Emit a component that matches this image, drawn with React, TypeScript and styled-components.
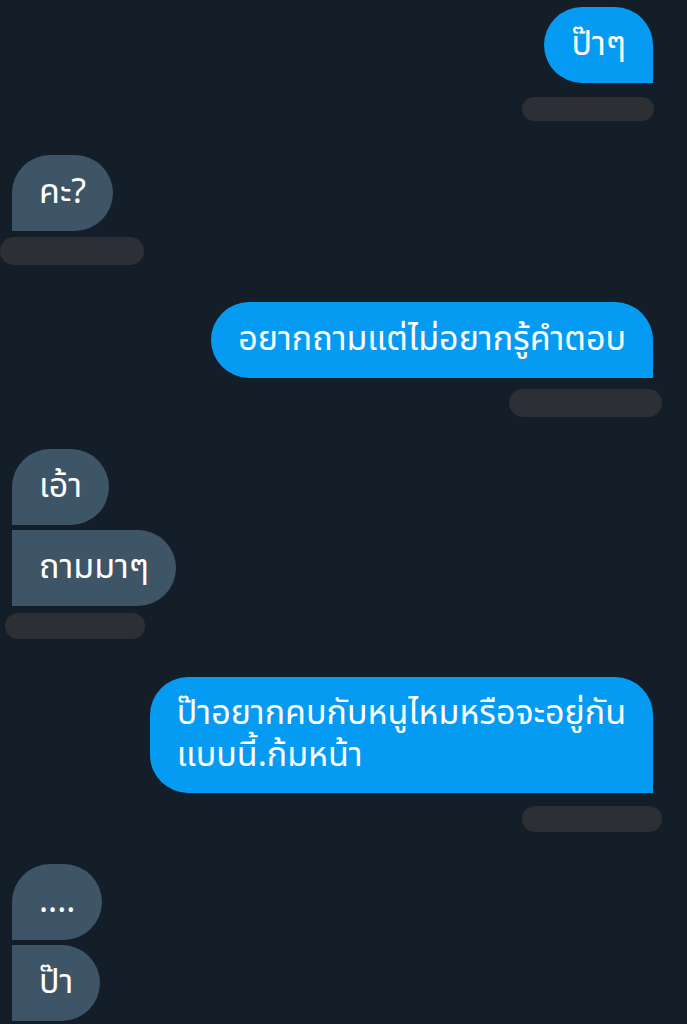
import React from "react";
import styled, { createGlobalStyle } from "styled-components";

const GlobalStyle = createGlobalStyle`
  html, body {
    margin: 0;
    padding: 0;
    background: #141e29;
  }
  body {
    font-family: "Noto Sans Thai", "Noto Sans", "DejaVu Sans", sans-serif;
    -webkit-font-smoothing: antialiased;
  }
`;

const Page = styled.div`
  width: 687px;
  height: 1024px;
  overflow: hidden;
  background: #141e29;
  padding-top: 7px;
  box-sizing: border-box;
  display: flex;
  flex-direction: column;
`;

type Side = "left" | "right";

const Group = styled.div<{ $side: Side; $top: number }>`
  display: flex;
  flex-direction: column;
  align-items: ${(p) => (p.$side === "right" ? "flex-end" : "flex-start")};
  margin-top: ${(p) => p.$top}px;
  padding: ${(p) => (p.$side === "right" ? "0 34px 0 0" : "0 0 0 12px")};
  gap: 5px;
`;

const Bubble = styled.div<{ $side: Side; $first: boolean }>`
  box-sizing: border-box;
  padding: 16px 27px;
  min-height: 76px;
  font-size: 34px;
  line-height: 42px;
  color: #ffffff;
  background: ${(p) => (p.$side === "right" ? "#069bf3" : "#3e5567")};
  border-radius: ${(p) =>
    p.$side === "right"
      ? `38px ${p.$first ? "38px" : "0"} 0 38px`
      : `${p.$first ? "38px" : "0"} 38px 38px 0`};
  max-width: 560px;
  white-space: pre;
  display: flex;
  align-items: center;
`;

const Redacted = styled.div<{ $w: number; $h: number; $shift: number; $gap: number }>`
  width: ${(p) => p.$w}px;
  height: ${(p) => p.$h}px;
  border-radius: ${(p) => p.$h / 2}px;
  background: #2c2f33;
  margin-top: ${(p) => p.$gap}px;
  transform: translateX(${(p) => p.$shift}px);
`;

type Msg = {
  side: Side;
  top: number;
  texts: string[];
  pill?: { w: number; h: number; shift: number; gap: number };
};

const messages: Msg[] = [
  { side: "right", top: 0, texts: ["ป๊าๆ"], pill: { w: 132, h: 24, shift: 1, gap: 9 } },
  { side: "left", top: 34, texts: ["คะ?"], pill: { w: 144, h: 28, shift: -12, gap: 1 } },
  {
    side: "right",
    top: 37,
    texts: ["อยากถามแต่ไม่อยากรู้คำตอบ"],
    pill: { w: 153, h: 28, shift: 9, gap: 6 },
  },
  { side: "left", top: 32, texts: ["เอ้า", "ถามมาๆ"], pill: { w: 140, h: 26, shift: -7, gap: 2 } },
  {
    side: "right",
    top: 38,
    texts: ["ป๊าอยากคบกับหนูไหมหรือจะอยู่กัน\nแบบนี้.ก้มหน้า"],
    pill: { w: 140, h: 26, shift: 9, gap: 8 },
  },
  { side: "left", top: 32, texts: ["....", "ป๊า"] },
];

export default function App() {
  return (
    <>
      <GlobalStyle />
      <Page>
        {messages.map((m, i) => (
          <Group key={i} $side={m.side} $top={m.top}>
            {m.texts.map((t, j) => (
              <Bubble key={j} $side={m.side} $first={j === 0}>
                {t}
              </Bubble>
            ))}
            {m.pill && (
              <Redacted $w={m.pill.w} $h={m.pill.h} $shift={m.pill.shift} $gap={m.pill.gap} />
            )}
          </Group>
        ))}
      </Page>
    </>
  );
}
